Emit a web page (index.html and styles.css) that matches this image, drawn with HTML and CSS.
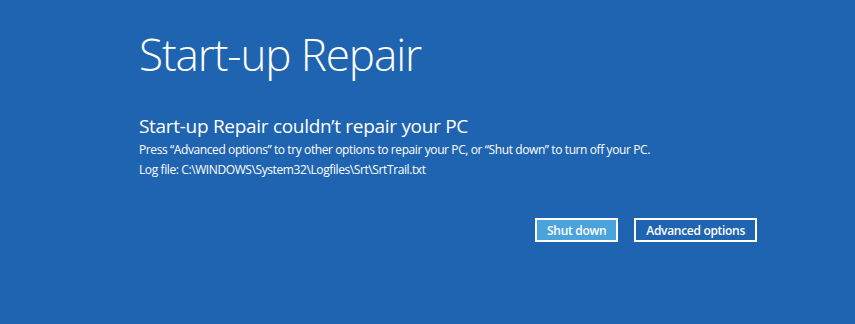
FILE: index.html
```html
<!DOCTYPE html>
<html lang="en">
<head>
    <meta charset="UTF-8">
    <title>Start-up Repair</title>
    <link rel="stylesheet" href="styles.css">
</head>
<body>
    <div class="screen">
        <h1 class="title">Start-up Repair</h1>
        <h2 class="subtitle">Start-up Repair couldn’t repair your PC</h2>
        <div class="messages">
            <p class="message">Press “Advanced options” to try other options to repair your PC, or “Shut down” to turn off your PC.</p>
            <p class="message">Log file: C:\WINDOWS\System32\Logfiles\Srt\SrtTrail.txt</p>
        </div>
        <div class="actions">
            <button class="btn btn-primary">Shut down</button>
            <button class="btn">Advanced options</button>
        </div>
    </div>
</body>
</html>
```

FILE: styles.css
```css
* {
    box-sizing: border-box;
    margin: 0;
    padding: 0;
    font-family: "Open Sans", "Noto Sans", sans-serif;
}

body {
    width: 855px;
    height: 324px;
    background-color: #1f64b0;
    color: #fff;
    overflow: hidden;
}

.screen {
    width: 757px;
    padding: 32px 0 0 139px;
}

.title {
    font-size: 44px;
    font-weight: 300;
    line-height: 1;
    letter-spacing: -1.1px;
}

.subtitle {
    margin-top: 41px;
    font-size: 19px;
    font-weight: 400;
    line-height: 1;
    letter-spacing: -0.3px;
}

.messages {
    margin-top: 4px;
}

.message {
    font-size: 12px;
    line-height: 20px;
    letter-spacing: -0.4px;
}

.actions {
    display: flex;
    justify-content: flex-end;
    gap: 16px;
    margin-top: 38px;
}

.btn {
    height: 24px;
    padding: 0 10px;
    border: 2px solid #fff;
    background-color: transparent;
    color: #fff;
    font-size: 12px;
    font-weight: 600;
    letter-spacing: -0.3px;
    white-space: nowrap;
}

.btn-primary {
    background-color: #4ba3dc;
}
```
